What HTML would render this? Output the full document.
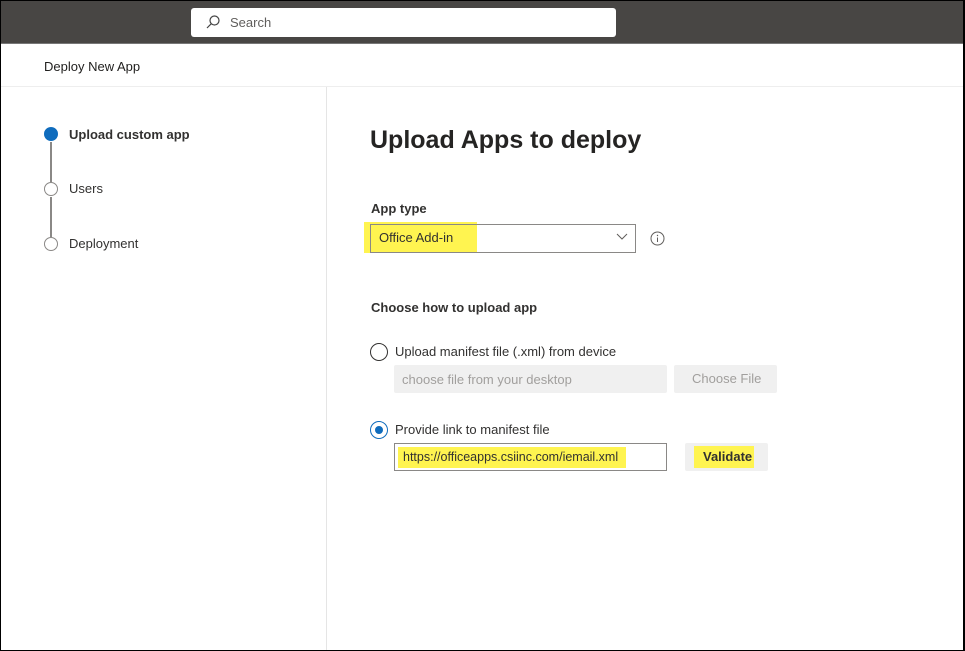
<!DOCTYPE html>
<html><head><style>
*{margin:0;padding:0;box-sizing:border-box}
body{width:965px;height:651px;overflow:hidden;background:#fff;font-family:"Segoe UI","Liberation Sans",sans-serif;color:#323130;position:relative}
.frame{position:absolute;inset:0;border:1px solid #000;border-right:2px solid #000;pointer-events:none;z-index:9}
.top{position:absolute;left:0;top:0;width:965px;height:44px;background:#484644;border-bottom:1px solid #777}
.search{position:absolute;left:191px;top:8px;width:425px;height:29px;background:#fff;border-radius:3px}
.search span{position:absolute;left:39px;top:7px;font-size:13px;color:#605e5c}
.a{position:absolute;white-space:nowrap}
.hdr{position:absolute;left:0;top:86px;width:965px;height:1px;background:#eee}
.vsep{position:absolute;left:326px;top:87px;width:1px;height:564px;background:#e5e5e5}
.dot{position:absolute;width:14px;height:14px;border-radius:50%;border:1.5px solid #8a8886;background:#fff}
.line{position:absolute;left:50px;width:1.5px;background:#8a8886}
.hl{background:#fff450}
.box{position:absolute;border:1px solid #8a8886;background:#fff}
.gray{position:absolute;background:#f0f0f0;border-radius:2px}
</style></head><body>
<div class="top"><div class="search"><svg style="position:absolute;left:14px;top:6px" width="16" height="16" viewBox="0 0 16 16"><circle cx="9.5" cy="6.5" r="4.5" fill="none" stroke="#444" stroke-width="1.2"/><line x1="6.3" y1="9.7" x2="2" y2="14" stroke="#444" stroke-width="1.2"/></svg><span>Search</span></div></div>
<div class="a" style="left:44px;top:59px;font-size:13px;color:#201f1e">Deploy New App</div>
<div class="hdr"></div>
<div class="vsep"></div>
<div class="dot" style="left:44px;top:127px;background:#0f6cbd;border-color:#0f6cbd"></div>
<div class="line" style="top:142px;height:40px"></div>
<div class="dot" style="left:44px;top:182px"></div>
<div class="line" style="top:197px;height:40px"></div>
<div class="dot" style="left:44px;top:237px"></div>
<div class="a" style="left:69px;top:127px;font-size:13px;font-weight:bold">Upload custom app</div>
<div class="a" style="left:69px;top:181px;font-size:13px">Users</div>
<div class="a" style="left:69px;top:236px;font-size:13px">Deployment</div>
<div class="a" style="left:370px;top:126px;font-size:25px;font-weight:bold;color:#252423">Upload Apps to deploy</div>
<div class="a" style="left:371px;top:201px;font-size:13px;font-weight:bold">App type</div>
<div class="a hl" style="left:364px;top:222px;width:113px;height:31px"></div>
<div class="box" style="left:370px;top:224px;width:266px;height:29px;background:transparent"></div>
<div class="a" style="left:379px;top:230px;font-size:13px">Office Add-in</div>
<svg class="a" style="left:616px;top:233px" width="12" height="8" viewBox="0 0 12 8"><path d="M1 1l5 5 5-5" fill="none" stroke="#605e5c" stroke-width="1"/></svg>
<svg class="a" style="left:650px;top:231px" width="15" height="15" viewBox="0 0 15 15"><circle cx="7.5" cy="7.5" r="6.5" fill="none" stroke="#605e5c"/><line x1="7.5" y1="6.5" x2="7.5" y2="11" stroke="#605e5c"/><circle cx="7.5" cy="4.5" r=".7" fill="#605e5c"/></svg>
<div class="a" style="left:371px;top:300px;font-size:13px;font-weight:bold">Choose how to upload app</div>
<div class="dot" style="left:370px;top:343px;width:18px;height:18px;border-color:#323130"></div>
<div class="a" style="left:395px;top:344px;font-size:13px">Upload manifest file (.xml) from device</div>
<div class="gray" style="left:394px;top:365px;width:273px;height:28px"></div>
<div class="a" style="left:402px;top:372px;font-size:13px;color:#a19f9d">choose file from your desktop</div>
<div class="gray" style="left:674px;top:365px;width:103px;height:28px"></div>
<div class="a" style="left:692px;top:371px;font-size:13px;color:#a19f9d">Choose File</div>
<div class="dot" style="left:370px;top:421px;width:18px;height:18px;border-color:#0f6cbd"></div>
<div class="a" style="left:375px;top:426px;width:8px;height:8px;border-radius:50%;background:#0f6cbd"></div>
<div class="a" style="left:395px;top:422px;font-size:13px">Provide link to manifest file</div>
<div class="box" style="left:394px;top:443px;width:273px;height:28px"></div>
<div class="a hl" style="left:398px;top:447px;width:228px;height:21px"></div>
<div class="a" style="left:403px;top:450px;font-size:12.5px">https://officeapps.csiinc.com/iemail.xml</div>
<div class="gray" style="left:685px;top:443px;width:83px;height:28px"></div>
<div class="a hl" style="left:694px;top:446px;width:60px;height:22px"></div>
<div class="a" style="left:703px;top:449px;font-size:13px;font-weight:bold">Validate</div>
<div class="frame"></div>
</body></html>
